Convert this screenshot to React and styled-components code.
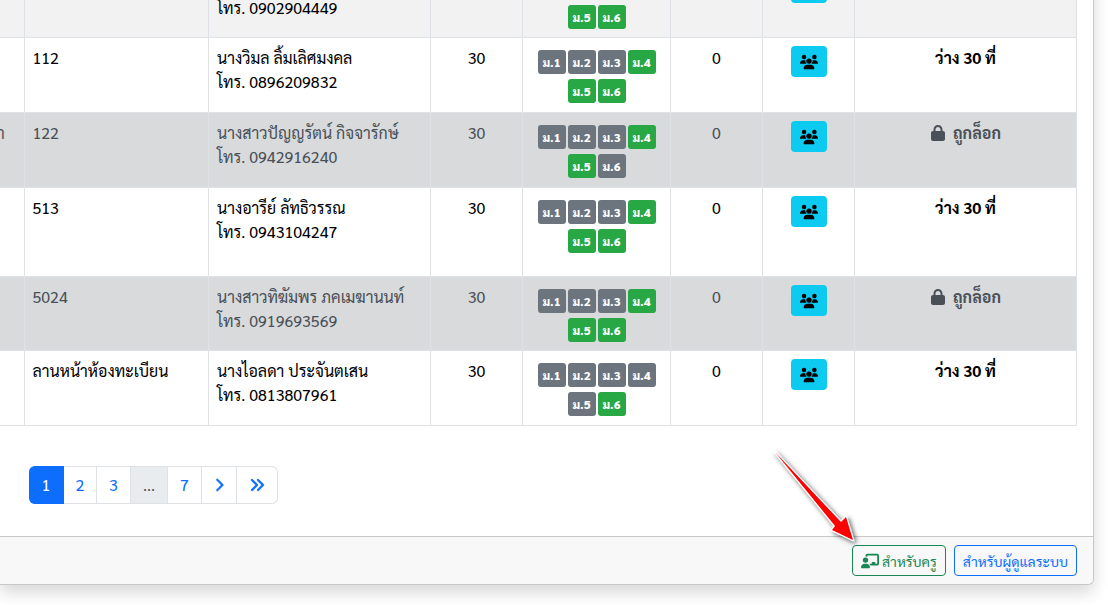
import React from "react";
import styled, { createGlobalStyle } from "styled-components";
import {
  FaUsers,
  FaLock,
  FaChalkboardUser,
  FaChevronRight,
  FaAnglesRight,
} from "react-icons/fa6";

const GlobalStyle = createGlobalStyle`
  *, *::before, *::after { box-sizing: border-box; }
  body {
    margin: 0;
    background: #fff;
    color: #000;
    font-family: "Sarabun", "Noto Sans Thai Looped", "Loma", "Noto Sans", sans-serif;
    font-size: 16px;
    line-height: 24px;
  }
`;

const Page = styled.main`
  overflow: hidden;
  padding: 0 14px 20px 0;
`;

const Card = styled.section`
  margin-top: -38px;
  border: 1px solid #c8c8c8;
  border-left: 0;
  border-radius: 0 0 6px 0;
  background: #fff;
  box-shadow: 0 8px 16px rgba(0, 0, 0, 0.15);
`;

const CardBody = styled.div`
  padding: 0 16px 32px 0;
`;

const RoomTable = styled.table`
  width: 100%;
  table-layout: fixed;
  border-collapse: collapse;
  border-bottom: 1px solid #dee2e6;
`;

const Col = styled.col`
  width: ${(p) => p.$width};
`;

const Row = styled.tr`
  height: ${(p) => p.$height}px;
  background: ${(p) => ({ locked: "#d8dadc", striped: "#f2f2f2" })[p.$tone] || "#fff"};
  color: ${(p) => (p.$tone === "locked" ? "#495057" : "#000")};
`;

const Cell = styled.td`
  padding: 8px;
  border: 1px solid #dee2e6;
  vertical-align: top;
  text-align: ${(p) => (p.$center ? "center" : "left")};
  font-weight: ${(p) => (p.$bold ? 700 : 400)};
`;

const BuildingCell = styled(Cell)`
  padding-left: 0;
  border-left: 0;
  text-indent: -3px;
`;

const BadgeCell = styled(Cell)`
  padding: 12px 8px 8px;
`;

const Badges = styled.div`
  display: flex;
  flex-wrap: wrap;
  justify-content: center;
  gap: 5px 2px;
`;

const BadgeGap = styled.div`
  height: 29px;
`;

const Badge = styled.span`
  width: 28px;
  height: 24px;
  border-radius: 3px;
  background: ${(p) => (p.$open ? "#28a745" : "#6c757d")};
  color: #fff;
  font-size: 12px;
  font-weight: 900;
  text-align: center;
`;

const MembersButton = styled.button`
  display: inline-flex;
  align-items: center;
  justify-content: center;
  width: 36px;
  height: 31px;
  padding: 0;
  border: 0;
  border-radius: 4px;
  background: #0dcaf0;
  color: #000;
  font-size: 18px;
`;

const LockedLabel = styled.span`
  display: inline-flex;
  align-items: center;
  gap: 7px;
`;

const Pagination = styled.nav`
  display: flex;
  margin: 40px 0 0 29px;
`;

const PageLink = styled.a`
  display: flex;
  align-items: center;
  justify-content: center;
  width: ${(p) => p.$width || 34}px;
  height: 38px;
  border: 1px solid #dee2e6;
  border-left-width: 0;
  background: #fff;
  color: #0d6efd;
  text-decoration: none;
  &:first-child {
    border-radius: 6px 0 0 6px;
  }
  &:last-child {
    border-radius: 0 6px 6px 0;
  }
  &[aria-current] {
    border-color: #0d6efd;
    background: #0d6efd;
    color: #fff;
  }
  &[aria-disabled] {
    background: #e9ecef;
    color: #495057;
  }
`;

const CardFooter = styled.footer`
  display: flex;
  justify-content: flex-end;
  gap: 8px;
  padding: 8px 16px;
  border-top: 1px solid #c8c8c8;
  border-radius: 0 0 6px 0;
  background: #f8f8f8;
`;

const RoleButton = styled.button`
  display: flex;
  align-items: center;
  gap: 3px;
  height: 31px;
  padding: 0 8px;
  border: 1px solid ${(p) => p.$color};
  border-radius: 4px;
  background: transparent;
  color: ${(p) => p.$color};
  font: inherit;
  font-size: 14px;
  white-space: nowrap;
`;

const PointedAt = styled.div`
  position: relative;
`;

const Pointer = styled.svg`
  position: absolute;
  left: -87px;
  top: -103px;
  pointer-events: none;
`;

const widths = ["24px", "auto", "222px", "92px", "148px", "92px", "92px", "222px"];

const rows = [
  { tone: "striped", height: 74, phone: "0902904449", open: [4, 5, 6] },
  { height: 75, room: "112", teacher: "นางวิมล ลิ้มเลิศมงคล", phone: "0896209832", open: [4, 5, 6], status: "ว่าง 30 ที่" },
  { tone: "locked", height: 75, building: "า", room: "122", teacher: "นางสาวปัญญรัตน์ กิจจารักษ์", phone: "0942916240", open: [4, 5] },
  { height: 89, room: "513", teacher: "นางอารีย์ ลัทธิวรรณ", phone: "0943104247", open: [4, 5, 6], status: "ว่าง 30 ที่" },
  { tone: "locked", height: 74, room: "5024", teacher: "นางสาวทิฆัมพร ภคเมฆานนท์", phone: "0919693569", open: [4, 5, 6] },
  { height: 75, room: "ลานหน้าห้องทะเบียน", teacher: "นางไอลดา ประจันตเสน", phone: "0813807961", open: [6], status: "ว่าง 30 ที่" },
];

function RoomRow({ row }) {
  // The first row is only partly in view: its upper badge line stays empty.
  const badges = row.teacher ? [1, 2, 3, 4, 5, 6] : [5, 6];
  return (
    <Row $tone={row.tone} $height={row.height}>
      <BuildingCell>{row.building}</BuildingCell>
      <Cell>{row.room}</Cell>
      <Cell>
        {row.teacher || "\u00a0"}
        <br />
        โทร. {row.phone}
      </Cell>
      <Cell $center>{row.teacher && "30"}</Cell>
      <BadgeCell>
        {!row.teacher && <BadgeGap />}
        <Badges>
          {badges.map((n) => (
            <Badge key={n} $open={row.open.includes(n)}>ม.{n}</Badge>
          ))}
        </Badges>
      </BadgeCell>
      <Cell $center>{row.teacher && "0"}</Cell>
      <Cell $center>
        <MembersButton type="button" aria-label="รายชื่อ"><FaUsers /></MembersButton>
      </Cell>
      <Cell $center $bold>
        {row.tone === "locked" ? <LockedLabel><FaLock />ถูกล็อก</LockedLabel> : row.status}
      </Cell>
    </Row>
  );
}

export default function App() {
  return (
    <>
      <GlobalStyle />
      <Page>
        <Card>
          <CardBody>
            <RoomTable>
              <colgroup>
                {widths.map((w, i) => <Col key={i} $width={w} />)}
              </colgroup>
              <tbody>
                {rows.map((row) => <RoomRow key={row.phone} row={row} />)}
              </tbody>
            </RoomTable>
            <Pagination>
              <PageLink href="#1" aria-current="page" $width={35}>1</PageLink>
              <PageLink href="#2" $width={33}>2</PageLink>
              <PageLink href="#3">3</PageLink>
              <PageLink aria-disabled="true" $width={37}>...</PageLink>
              <PageLink href="#7">7</PageLink>
              <PageLink href="#next" $width={35} aria-label="ถัดไป"><FaChevronRight size={14} strokeWidth={20} /></PageLink>
              <PageLink href="#last" $width={41} aria-label="สุดท้าย"><FaAnglesRight size={16} strokeWidth={10} /></PageLink>
            </Pagination>
          </CardBody>
          <CardFooter>
            <PointedAt>
              <RoleButton type="button" $color="#198754"><FaChalkboardUser size={18} />สำหรับครู</RoleButton>
              <Pointer width="110" height="115" viewBox="0 0 110 115" aria-hidden="true">
                <defs>
                  <filter id="pointer-shadow" x="-20%" y="-20%" width="150%" height="150%">
                    <feDropShadow dx="2" dy="2" stdDeviation="2.5" floodColor="#000" floodOpacity="0.65" />
                  </filter>
                </defs>
                <path
                  d="M10 10 L76 80 L81 75 L88 98 L67 88 L70 84 Z"
                  fill="#f00"
                  stroke="#fff"
                  strokeWidth="2.4"
                  strokeLinejoin="round"
                  paintOrder="stroke"
                  filter="url(#pointer-shadow)"
                />
              </Pointer>
            </PointedAt>
            <RoleButton type="button" $color="#0d6efd">สำหรับผู้ดูแลระบบ</RoleButton>
          </CardFooter>
        </Card>
      </Page>
    </>
  );
}
